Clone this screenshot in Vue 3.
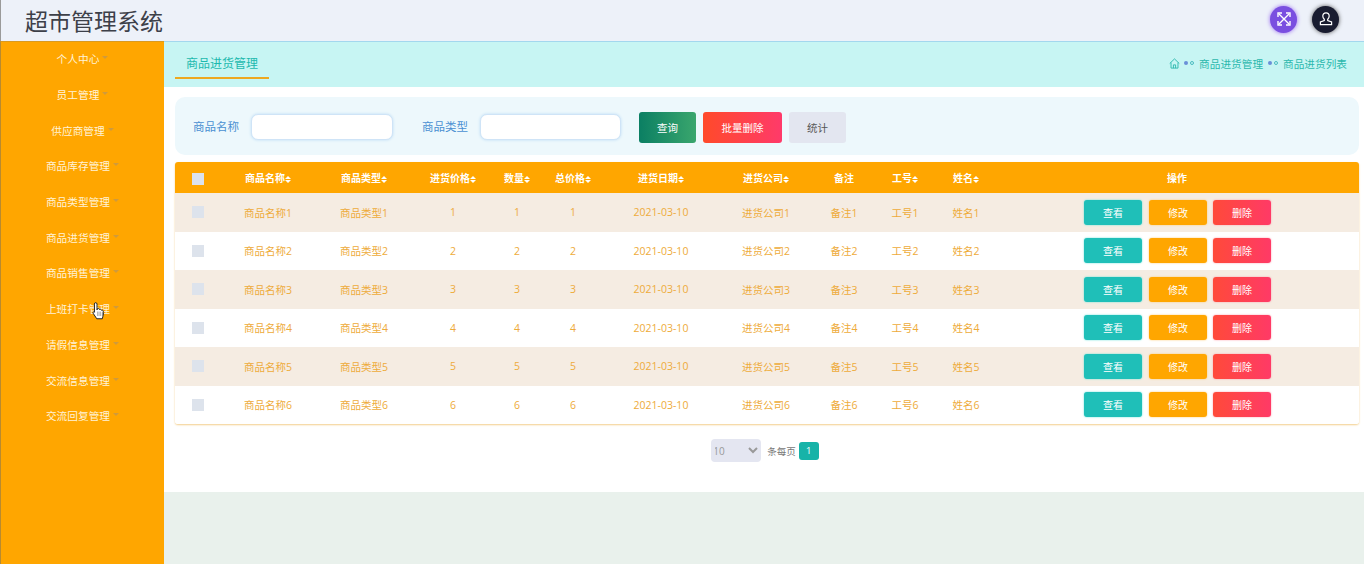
<template>
  <div class="page">
    <header class="topbar">
      <h1 class="title">超市管理系统</h1>
      <div class="top-actions">
        <span class="round round--purple">
          <svg width="16" height="16" viewBox="0 0 16 16" fill="none" stroke="#fff" stroke-width="1.4">
            <path d="M3 3l10 10M13 3L3 13" />
            <path d="M2 6V2h4M10 2h4v4M14 10v4h-4M6 14H2v-4" />
          </svg>
        </span>
        <span class="round round--dark">
          <svg width="16" height="16" viewBox="0 0 16 16" fill="none" stroke="#fff" stroke-width="1.2">
            <path d="M8 1.8c-2 0-3.2 1.4-3.2 3.3 0 1.4.6 2.5 1.5 3.2v1.2L2.4 11v2.6h11.2V11L9.700 9.500V8.300c.9-.7 1.500-1.800 1.500-3.200 0-1.900-1.200-3.300-3.200-3.300z" />
          </svg>
        </span>
      </div>
    </header>

    <div class="body">
      <aside class="sidebar">
        <a v-for="item in menu" :key="item" class="menu-item">
          {{ item }}<i class="caret"></i>
        </a>
      </aside>

      <main class="main">
        <div class="crumbs">
          <div class="tab">商品进货管理</div>
          <div class="path">
            <svg class="home" width="11" height="11" viewBox="0 0 12 12" fill="none" stroke="#2bb8ad" stroke-width="1">
              <path d="M.8 6L6 1l5.200 5M2.200 5v6h7.600V5M4.800 11V7.500h2.400V11" />
            </svg>
            <i class="dots"><b></b><b></b></i>
            <span>商品进货管理</span>
            <i class="dots"><b></b><b></b></i>
            <span>商品进货列表</span>
          </div>
        </div>

        <section class="content">
          <form class="search" @submit.prevent>
            <label class="field">商品名称<input type="text" /></label>
            <label class="field field--second">商品类型<input type="text" /></label>
            <div class="search-btns">
              <button class="btn btn--query">查询</button>
              <button class="btn btn--batch">批量删除</button>
              <button class="btn btn--stat">统计</button>
            </div>
          </form>

          <div class="table-wrap">
            <table>
              <colgroup>
                <col v-for="w in colWidths" :key="w.id" :style="{ width: w.px + 'px' }" />
              </colgroup>
              <thead>
                <tr>
                  <th><span class="check check--head"></span></th>
                  <th v-for="h in headers" :key="h.label">
                    {{ h.label }}<i v-if="h.sort" class="sort"></i>
                  </th>
                  <th>操作</th>
                </tr>
              </thead>
              <tbody>
                <tr v-for="n in 6" :key="n">
                  <td><span class="check"></span></td>
                  <td>商品名称{{ n }}</td>
                  <td>商品类型{{ n }}</td>
                  <td>{{ n }}</td>
                  <td>{{ n }}</td>
                  <td>{{ n }}</td>
                  <td>2021-03-10</td>
                  <td>进货公司{{ n }}</td>
                  <td>备注{{ n }}</td>
                  <td>工号{{ n }}</td>
                  <td>姓名{{ n }}</td>
                  <td>
                    <div class="row-btns">
                      <button class="mini mini--view">查看</button>
                      <button class="mini mini--edit">修改</button>
                      <button class="mini mini--del">删除</button>
                    </div>
                  </td>
                </tr>
              </tbody>
            </table>
          </div>

          <div class="pager">
            <select class="size"><option>10</option></select>
            <span class="per">条每页</span>
            <span class="num">1</span>
          </div>
        </section>
      </main>
    </div>

    <svg class="cursor" width="16" height="20" viewBox="0 0 14 18">
      <path d="M4 1.500c.8 0 1.200.5 1.200 1.300V8l.5-1.200c.9-.3 1.500 0 1.700.8.800-.4 1.500-.1 1.700.7.800-.3 1.500 0 1.700.8.300 1.700.2 3.600-.4 5.200l-.4 1.700H5l-3.300-5c-.4-.8.300-1.500 1.100-1l.1.100V2.800c0-.8.300-1.300 1.100-1.300z" fill="#fff" stroke="#222" stroke-width=".9" stroke-linejoin="round" />
      <path d="M6 9.500v4M8 9.500v4M10 10v3.500" stroke="#555" stroke-width=".6" />
    </svg>
  </div>
</template>

<script setup>
const menu = [
  '个人中心', '员工管理', '供应商管理', '商品库存管理', '商品类型管理', '商品进货管理',
  '商品销售管理', '上班打卡管理', '请假信息管理', '交流信息管理', '交流回复管理'
];

const headers = [
  { label: '商品名称', sort: true },
  { label: '商品类型', sort: true },
  { label: '进货价格', sort: true },
  { label: '数量', sort: true },
  { label: '总价格', sort: true },
  { label: '进货日期', sort: true },
  { label: '进货公司', sort: true },
  { label: '备注', sort: false },
  { label: '工号', sort: true },
  { label: '姓名', sort: true }
];

const colWidths = [46, 94, 98, 80, 48, 64, 112, 98, 58, 64, 58, 364].map((px, id) => ({ id, px }));
</script>

<style>
html, body { margin: 0; background: #e9f1ec; }
</style>

<style scoped>
.page {
  position: relative;
  width: 1364px;
  height: 564px;
  overflow: hidden;
  font-family: "Noto Sans CJK SC", "Open Sans", sans-serif;
}
.topbar {
  height: 41px;
  box-sizing: border-box;
  display: flex;
  align-items: center;
  justify-content: space-between;
  padding: 0 25px 0 24px;
  background: #edf1f9;
  border-left: 1px solid #9a9a9a;
}
.title { margin: 0; font-size: 23px; font-weight: 400; color: #3d4049; line-height: 41px; }
.top-actions { display: flex; gap: 15px; align-items: center; margin-bottom: 3px; }
.round { width: 27px; height: 27px; border-radius: 50%; display: flex; align-items: center; justify-content: center; }
.round--purple { background: #7a4fe0; box-shadow: 0 0 4px #9a6cf0; }
.round--dark { background: #191c30; box-shadow: 0 0 4px #555; }

.body { display: flex; height: 523px; }
.sidebar {
  width: 164px;
  box-sizing: border-box;
  background: #ffa600;
  border-left: 1px solid #b88a30;
  border-top: 1px solid #d99a20;
  display: flex;
  flex-direction: column;
}
.menu-item {
  height: 35.7px;
  display: flex;
  align-items: center;
  justify-content: center;
  font-size: 10.700px;
  color: #fff3d8;
  flex: none;
  position: relative;
  top: -1px;
}
.caret {
  display: inline-block;
  margin: 0 0 2px 3px;
  border: 3px solid transparent;
  border-top-color: #cf9a3c;
  border-bottom: 0;
}

.main { flex: 1; min-width: 0; display: flex; flex-direction: column; }
.crumbs {
  height: 46px;
  box-sizing: border-box;
  background: #c7f5f3;
  border-top: 1px solid #a3d7ee;
  display: flex;
  justify-content: space-between;
  padding: 0 17px 0 11px;
}
.tab {
  width: 94px;
  height: 37px;
  box-sizing: border-box;
  text-align: center;
  line-height: 25px;
  padding-top: 8px;
  font-size: 12px;
  color: #1cb9ae;
  border-bottom: 2px solid #eda820;
}
.path {
  display: flex;
  align-items: center;
  gap: 5px;
  height: 42px;
  font-size: 10.670px;
  color: #2bb8ad;
}
.home { margin-right: -1px; }
.dots { display: inline-flex; gap: 2px; align-items: center; }
.dots b { width: 4px; height: 4px; border-radius: 50%; background: #6a8fd8; }
.dots b + b { box-sizing: border-box; background: none; border: 1px solid #4bbcc0; }

.content { height: 405px; background: #fff; padding: 10px 5px 0 11px; box-sizing: border-box; }
.search {
  height: 58px;
  box-sizing: border-box;
  background: #edf8fc;
  border-radius: 10px;
  display: flex;
  align-items: center;
  padding-left: 18px;
}
.field {
  display: flex;
  align-items: center;
  gap: 12px;
  font-size: 11.500px;
  color: #4a90d2;
}
.field input {
  width: 142px;
  height: 26px;
  box-sizing: border-box;
  margin: 1px 0 0;
  border: 1px solid #cfe4f7;
  border-radius: 7px;
  background: #fff;
  box-shadow: 0 0 3px #bcdcf5;
  outline: none;
}
.field--second { margin-left: 29px; }
.field--second input { width: 141px; }
.search-btns { display: flex; gap: 7px; margin-left: 18px; margin-top: 3px; }
.btn {
  height: 31px;
  width: 57px;
  border: none;
  border-radius: 3px;
  font-family: inherit;
  font-size: 10.500px;
  color: #fff;
  padding: 0;
}
.btn--query { background: linear-gradient(90deg, #0b7f63, #3aa66d); }
.btn--batch { width: 79px; background: linear-gradient(90deg, #ff4a2a, #ff3a6a); }
.btn--stat { background: #e3e6f0; color: #555; }

.table-wrap {
  margin-top: 7px;
  width: 1184px;
  box-sizing: border-box;
  border-radius: 3px;
  overflow: hidden;
  box-shadow: 0 1px 2px #f3cf8c;
}
table { width: 1184px; border-collapse: collapse; table-layout: fixed; }
th {
  height: 31px;
  padding: 0;
  background: #ffa600;
  color: #fff;
  font-size: 10px;
  font-weight: 700;
  text-align: center;
}
td {
  height: 38.500px;
  padding: 0;
  color: #eeab3a;
  font-size: 10.500px;
  text-align: center;
  font-family: "Open Sans", "Noto Sans CJK SC", sans-serif;
}
tbody tr:nth-child(odd) { background: #f5ece2; }
tbody tr:nth-child(even) { background: #fff; }
.check {
  display: inline-block;
  width: 12px;
  height: 12px;
  background: #dde3ec;
  vertical-align: middle;
  position: relative;
  top: -1px;
}
.check--head { background: #dbe2ee; top: 0; }
.sort {
  display: inline-block;
  position: relative;
  width: 6px;
  height: 7px;
  vertical-align: -1px;
}
.sort::before,
.sort::after {
  content: "";
  position: absolute;
  left: 0;
  border-left: 3px solid transparent;
  border-right: 3px solid transparent;
}
.sort::before { top: 0; border-bottom: 3px solid #fff; }
.sort::after { bottom: 0; border-top: 3px solid #fff; }
.row-btns { display: flex; justify-content: center; gap: 7px; padding-left: 1px; }
.mini {
  width: 58px;
  height: 25px;
  border: none;
  border-radius: 3px;
  padding: 0;
  color: #fff;
  font-family: "Noto Sans CJK SC", sans-serif;
  font-size: 10px;
}
.mini--view { background: #1fbfb8; box-shadow: 0 0 2px #5fe0da; }
.mini--edit { background: #ffa600; box-shadow: 0 0 2px #ffc766; }
.mini--del { margin-left: -1px; background: linear-gradient(90deg, #ff4a3a, #ff3a66); box-shadow: 0 0 2px #ff9aa8; }

.pager {
  display: flex;
  align-items: center;
  justify-content: center;
  margin-top: 15px;
  padding-right: 4px;
}
.size {
  width: 50px;
  height: 23px;
  border: none;
  border-radius: 4px;
  background: #e4e6f1;
  color: #999;
  font-size: 10px;
  font-family: "Open Sans", sans-serif;
  padding-left: 0;
  text-indent: -2px;
}
.per { margin: 0 3px 0 6px; font-size: 9.500px; color: #777; }
.num {
  width: 20px;
  height: 18px;
  border-radius: 3px;
  background: #17b3a8;
  color: #fff;
  font-size: 9.500px;
  line-height: 18px;
  text-align: center;
  font-family: "Open Sans", sans-serif;
}
.cursor { position: absolute; left: 91px; top: 301px; }
</style>
